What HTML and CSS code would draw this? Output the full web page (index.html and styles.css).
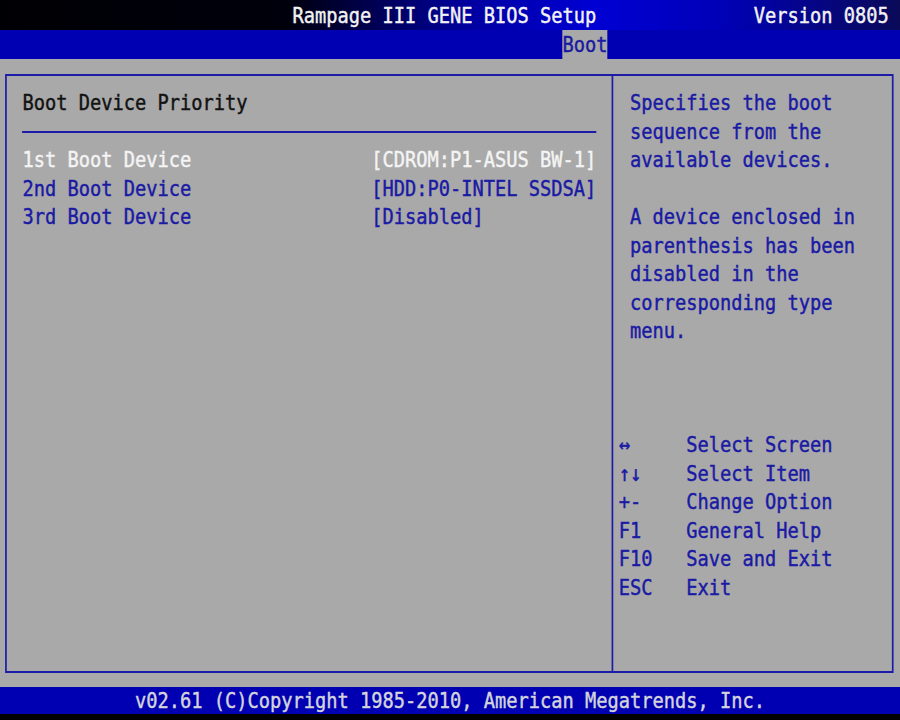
FILE: index.html
```html
<!DOCTYPE html>
<html lang="en">

<head>
    <meta charset="UTF-8">
    <meta name="viewport" content="width=device-width, initial-scale=1.0">
    <title>BIOS Setup - Boot</title>
    <link rel="stylesheet" href="styles.css">
</head>

<body>
    <div class="screen">
        <header class="title-bar">
            <span class="title">Rampage III GENE BIOS Setup</span>
            <span class="version">Version 0805</span>
        </header>

        <nav class="menu-bar">
            <span class="tab active">Boot</span>
        </nav>

        <main class="workspace">
            <div class="frame">
                <section class="settings">
                    <div class="heading">Boot Device Priority</div>
                    <div class="rule"></div>
                    <div class="row selected">
                        <span class="label">1st Boot Device</span>
                        <span class="value">[CDROM:P1-ASUS BW-1]</span>
                    </div>
                    <div class="row">
                        <span class="label">2nd Boot Device</span>
                        <span class="value">[HDD:P0-INTEL SSDSA]</span>
                    </div>
                    <div class="row">
                        <span class="label">3rd Boot Device</span>
                        <span class="value">[Disabled]</span>
                    </div>
                </section>

                <aside class="help">
                    <p>Specifies the boot<br>sequence from the<br>available devices.</p>
                    <p>A device enclosed in<br>parenthesis has been<br>disabled in the<br>corresponding type<br>menu.</p>

                    <dl class="keys">
                        <dt>↔</dt><dd>Select Screen</dd>
                        <dt>↑↓</dt><dd>Select Item</dd>
                        <dt>+-</dt><dd>Change Option</dd>
                        <dt>F1</dt><dd>General Help</dd>
                        <dt>F10</dt><dd>Save and Exit</dd>
                        <dt>ESC</dt><dd>Exit</dd>
                    </dl>
                </aside>
            </div>
        </main>

        <footer class="copyright">v02.61 (C)Copyright 1985-2010, American Megatrends, Inc.</footer>
    </div>
</body>

</html>
```

FILE: styles.css
```css
body {
    margin: 0;
    padding: 0;
    background-color: #000;
    overflow: hidden;
}

/* 80 text columns, squeezed to the 900px window like the BIOS font */
.screen {
    width: 80ch;
    height: 720px;
    display: flex;
    flex-direction: column;
    overflow: hidden;
    font-family: "DejaVu Sans Mono", "Liberation Mono", monospace;
    font-size: 22px;
    line-height: 28.5px;
    white-space: nowrap;
    -webkit-text-stroke: 0.45px currentColor;
    transform: scaleX(0.8494);
    transform-origin: 0 0;
}

.title-bar {
    height: 30px;
    line-height: 31px;
    display: flex;
    justify-content: space-between;
    padding: 0 1ch 0 26ch;
    color: #f2f2f2;
    background: linear-gradient(to right, #000004 0%, #00000c 32%, #0000a0 52%, #0000d4 66%, #0000b8 80%, #0a0a58 100%);
}

.menu-bar {
    height: 29px;
    line-height: 29px;
    padding-left: 50ch;
    background-color: #0000b2;
}

.tab {
    display: inline-block;
    width: 4ch;
    color: #1a1aa0;
}

.tab.active {
    background-color: #a9a9a9;
}

.workspace {
    flex: 1;
    display: flex;
    background-color: #a9a9a9;
}

.frame {
    flex: 1;
    margin: 15px 0.6ch 14px 0.45ch;
    border: 2px solid #1c1ca8;
    display: grid;
    grid-template-columns: 53.9ch 1fr;
}

.settings {
    padding: 13px 0 0 1.4ch;
    border-right: 2px solid #1c1ca8;
}

.heading {
    color: #121212;
}

.rule {
    width: 51ch;
    height: 28.5px;
    background: linear-gradient(#1c1ca8, #1c1ca8) no-repeat 0 13px / 100% 2px;
}

.row {
    display: grid;
    grid-template-columns: 31ch auto;
    color: #1a1aa4;
}

.row.selected {
    color: #f4f4f4;
}

.help {
    padding: 13px 0 0 0.5ch;
    color: #1a1aa4;
}

.help p {
    margin: 0 0 28.5px 1ch;
}

/* three blank text rows between the help text and the key legend */
.keys {
    margin: 85.5px 0 0;
    display: grid;
    grid-template-columns: 6ch auto;
}

.keys dt,
.keys dd {
    margin: 0;
}

.copyright {
    height: 27px;
    line-height: 27px;
    margin-bottom: 6px;
    text-align: center;
    color: #d4d4dc;
    background-color: #0000b2;
}
```
